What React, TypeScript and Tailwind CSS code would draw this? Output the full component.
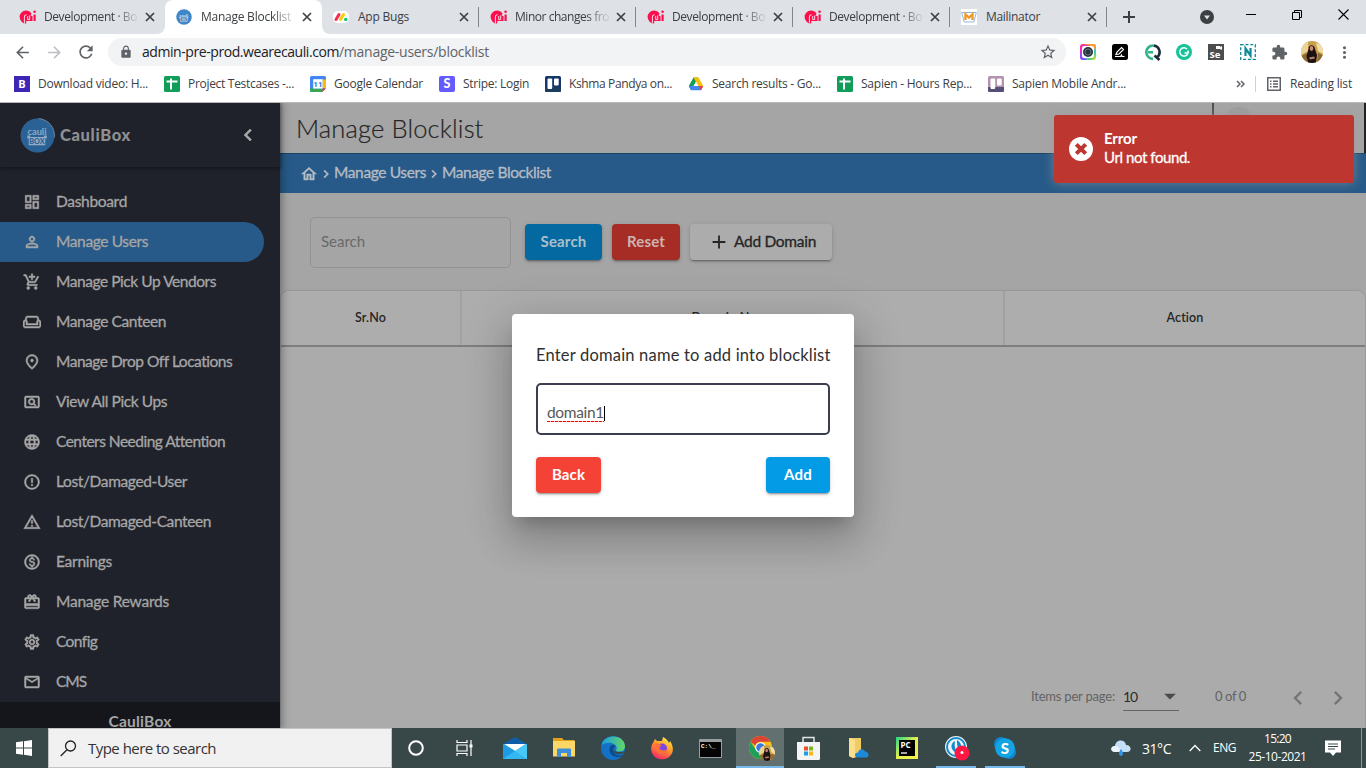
import { useLayoutEffect, useRef, type ReactNode } from "react";
import {
  MdOutlineDashboard, MdPersonOutline, MdOutlineAddShoppingCart, MdOutlineWeekend,
  MdOutlinePlace, MdOutlinePageview, MdLanguage, MdErrorOutline, MdOutlineReportProblem,
  MdOutlineMonetizationOn, MdCardGiftcard, MdOutlineSettings, MdMailOutline,
  MdChevronLeft, MdChevronRight, MdOutlineHome, MdAdd, MdArrowDropDown, MdLock,
  MdRefresh, MdArrowBack, MdArrowForward, MdStarBorder, MdMoreVert, MdExtension,
} from "react-icons/md";

/* Single-line label whose tracking is set so that it takes exactly `w` pixels. */
function Label({ w, className = "", children }: { w: number; className?: string; children: string }) {
  const ref = useRef<HTMLSpanElement>(null);
  useLayoutEffect(() => {
    const el = ref.current;
    if (!el) return;
    el.style.letterSpacing = "0px";
    const natural = el.getBoundingClientRect().width;
    el.style.letterSpacing = `${(w - natural) / children.length}px`;
  }, [w, children]);
  return <span ref={ref} className={`inline-block shrink-0 whitespace-pre ${className}`}>{children}</span>;
}

/* ---------- favicons ---------- */
const MiIcon = () => (
  <svg width="17" height="16" viewBox="0 0 17 16" fill="none">
    <path d="M7 1.500a6.400 6.400 0 0 1 5.500 2.700L11.500 6.500 13.500 7v5H7.200v2.500A6.500 6.500 0 0 1 7 1.500z" fill="#fb0f4d" />
    <path d="M5.400 14.300V8a2 2 0 0 1 2.200-2.200M8.700 7v3.600h2V6.500" stroke="#f7dbe3" strokeWidth="1" />
    <path d="M15.600 5.500v6.500" stroke="#fb0f4d" strokeWidth="2.200" />
    <circle cx="15.600" cy="2.800" r="1.300" fill="#fb0f4d" />
  </svg>
);
const CauliIcon = ({ size }: { size: number }) => (
  <svg width={size} height={size} viewBox="0 0 36 36">
    <circle cx="18" cy="18" r="17.500" fill={size > 20 ? "#2a6296" : "#3f86c9"} />
    {size > 20 && <path d="M19 .6A17.500 17.500 0 0 1 35.400 20" fill="none" stroke="#7f96ab" strokeWidth=".8" />}
    <g fill={size > 20 ? "#8fabc5" : "#d6e6f5"}>
      <text x="17.500" y="17" textAnchor="middle" fontSize="9.500" fontWeight="bold" fontFamily="Lato, sans-serif">cauli</text>
      <path d="M7.500 18h3v1.500h14V18h3v3h-1.500v7h-17v-7H7.500z" />
    </g>
    <text x="17.500" y="26.800" textAnchor="middle" fontSize="7.500" fontWeight="900" fontFamily="Lato, sans-serif" fill="#2a6296">BOX</text>
  </svg>
);
const MondayIcon = () => (
  <svg width="16" height="16" viewBox="0 0 16 16">
    <rect width="16" height="12" rx="5" y="2" fill="#fff" />
    <path d="M3 10.500L6 5.500" stroke="#f62b54" strokeWidth="3" strokeLinecap="round" />
    <path d="M7.500 10.500l3-5" stroke="#fc0" strokeWidth="3" strokeLinecap="round" />
    <circle cx="12.700" cy="10.400" r="1.700" fill="#00ca72" />
  </svg>
);
const MailinatorIcon = () => (
  <svg width="16" height="16" viewBox="0 0 16 16">
    <rect width="16" height="16" fill="#fff" />
    <path d="M.7 3.500h14.600l-2.500 9.500H3.200z" fill="none" stroke="#8db8dc" />
    <path d="M4.500 11V5.200L8 8.500l3.500-3.300V11" fill="none" stroke="#f09a2c" strokeWidth="2.400" />
  </svg>
);
const SheetsIcon = () => (
  <svg width="16" height="16" viewBox="0 0 16 16">
    <rect width="16" height="16" rx="1.500" fill="#0f9d58" />
    <path d="M2.500 5.600h11M7 2.500v11" stroke="#fff" strokeWidth="2" />
  </svg>
);
const BIcon = () => (
  <svg width="16" height="16" viewBox="0 0 16 16">
    <rect width="16" height="16" fill="#3f25b5" />
    <text x="8" y="12" textAnchor="middle" fontSize="11" fontWeight="bold" fill="#fff" fontFamily="Open Sans, sans-serif">B</text>
  </svg>
);
const CalendarIcon = () => (
  <svg width="16" height="16" viewBox="0 0 16 16">
    <path d="M1.500 0h13A1.500 1.500 0 0 1 16 1.500V12l-4 4H1.500A1.500 1.500 0 0 1 0 14.500v-13A1.500 1.500 0 0 1 1.500 0z" fill="#4285f4" />
    <path d="M12.500 3.500H16V12h-3.500z" fill="#fbbc04" />
    <path d="M0 12.500h12.500V16H1.500A1.500 1.500 0 0 1 0 14.500z" fill="#34a853" />
    <path d="M12.500 12.500H16L12.500 16z" fill="#ea4335" />
    <path d="M3.200 3.200h9.400v9.400H3.200z" fill="#fff" />
    <text x="7.900" y="11" textAnchor="middle" fontSize="8" fontWeight="bold" fill="#1a73e8" fontFamily="Roboto, sans-serif">11</text>
  </svg>
);
const StripeIcon = () => (
  <svg width="16" height="16" viewBox="0 0 16 16">
    <rect width="16" height="16" rx="2" fill="#635bff" />
    <text x="8" y="12.300" textAnchor="middle" fontSize="12.500" fontWeight="900" fill="#fff" fontFamily="Lato, sans-serif">S</text>
  </svg>
);
const TrelloIcon = ({ mauve = false }: { mauve?: boolean }) => (
  <svg width="16" height="16" viewBox="0 0 16 16">
    <rect width="16" height="16" rx="1.500" fill={mauve ? "#b493ae" : "#17366b"} />
    <path d="M0 11h16v3.500a1.500 1.500 0 0 1-1.500 1.500h-13A1.500 1.500 0 0 1 0 14.500z" fill={mauve ? "#54507a" : "#1b3d5c"} />
    <rect x="2.500" y="2.500" width="4.700" height="10.500" rx="1" fill="#fff" />
    <rect x="9" y="2.500" width="4.700" height="7" rx="1" fill="#fff" />
  </svg>
);
const DriveIcon = () => (
  <svg width="16" height="16" viewBox="0 0 16 16">
    <path d="M5.500 1.500h5L5.300 10.500 3.200 14.300.8 10z" fill="#0f9d58" />
    <path d="M5.500 1.500h5l4.700 8.500h-5z" fill="#fbbc04" />
    <path d="M.8 10.200L3 14.300h10l2.200-4.300H5.500z" fill="#4285f4" />
    <path d="M10.500 10h4.700L13 14.300z" fill="#ea4335" />
    <path d="M8 5.800L10.400 10H5.600z" fill="#fff" />
  </svg>
);

const CloseX = () => (
  <svg width="10" height="10" viewBox="0 0 10 10" stroke="#3c4043" strokeWidth="1.700"><path d="M1 1l8 8M9 1L1 9" /></svg>
);

/* ---------- browser chrome ---------- */
function Tab({ icon, title, w, active = false, fade = true, line = true }: {
  icon: ReactNode; title: string; w: number; active?: boolean; fade?: boolean; line?: boolean;
}) {
  return (
    <div className={`relative flex h-[34px] w-[157px] shrink-0 items-center pl-[11px] ${active ? "rounded-t-lg bg-white" : ""}`}>
      <div className="flex w-[17px] shrink-0">{icon}</div>
      <div className={`ml-2 flex w-[94px] pb-px ${fade ? "[mask-image:linear-gradient(to_right,#000_75%,#0002_98%)]" : ""}`}>
        <Label w={w} className="text-[12px] leading-4 text-[#3c4043]">{title}</Label>
      </div>
      <div className="ml-[7px]"><CloseX /></div>
      {line && <div className="absolute right-0 top-[7px] h-5 w-px bg-[#80868b]" />}
      {active && (
        <>
          <svg className="absolute -left-2 bottom-0" width="8" height="8"><path d="M8 0v8H0a8 8 0 0 0 8-8" fill="#fff" /></svg>
          <svg className="absolute -right-2 bottom-0" width="8" height="8"><path d="M0 0v8h8a8 8 0 0 1-8-8" fill="#fff" /></svg>
        </>
      )}
    </div>
  );
}

function TabStrip() {
  return (
    <div className="flex h-[34px] items-center bg-[#dee1e6] pl-2">
      <Tab icon={<MiIcon />} title="Development · Bo" w={93} line={false} />
      <Tab icon={<CauliIcon size={16} />} title="Manage Blocklist" w={90} active line={false} />
      <Tab icon={<MondayIcon />} title="App Bugs" w={51} fade={false} />
      <Tab icon={<MiIcon />} title="Minor changes fro" w={94} />
      <Tab icon={<MiIcon />} title="Development · Bo" w={93} />
      <Tab icon={<MiIcon />} title="Development · Bo" w={93} />
      <Tab icon={<MailinatorIcon />} title="Mailinator" w={54} fade={false} />
      <svg className="ml-[16px]" width="12" height="12" stroke="#3c4043" strokeWidth="2"><path d="M6 0v12M0 6h12" /></svg>
      <svg className="ml-[65px]" width="14" height="14"><circle cx="7" cy="7" r="7" fill="#3c4043" /><path d="M4 5.500h6L7 9.500z" fill="#dee1e6" /></svg>
      <svg className="ml-[32px]" width="10" height="14" stroke="#000"><path d="M0 4.500h10" /></svg>
      <svg className="ml-[36px]" width="11" height="16" fill="none" stroke="#000"><path d="M.5 3.500h7v7h-7zM2.500 3.500v-2h7v7h-2" /></svg>
      <svg className="ml-[35px]" width="11" height="16" stroke="#000" strokeWidth="1.100"><path d="M.5.500l10 10M10.500.500l-10 10" /></svg>
    </div>
  );
}

function Avatar({ size }: { size: number }) {
  return (
    <svg width={size} height={size} viewBox="0 0 22 22">
      <defs><clipPath id={`av${size}`}><circle cx="11" cy="11" r="11" /></clipPath></defs>
      <g clipPath={`url(#av${size})`}>
        <path d="M0 0h22v22H0z" fill="#c9a04c" />
        <path d="M0 3l7-3v10l-7 4z" fill="#e9d39b" /><path d="M15 2l7 2v9l-5-3z" fill="#f1dda7" />
        <path d="M0 15l6-3v10H0zM17 12l5 2v8h-6z" fill="#8d6a34" />
        <path d="M7.500 8c0-5 6-5 6.500 0l2 6-1 8H7l-1.500-7z" fill="#1c1214" />
        <ellipse cx="10.500" cy="7.500" rx="1.800" ry="2.400" fill="#c58b72" />
        <path d="M8 16.500l5-1 1 2-5 1z" fill="#b47f67" />
      </g>
    </svg>
  );
}

function Toolbar() {
  return (
    <div className="flex h-[35px] items-center bg-white pl-[13px] pt-px text-[#5f6368]">
      <MdArrowBack size={19} />
      <MdArrowForward size={19} className="ml-[13px] text-[#bcbec1]" />
      <MdRefresh size={20} className="ml-[12px]" />
      <div className="ml-3 flex h-7 w-[958px] items-center rounded-full bg-[#f1f3f4] pl-[11px] pr-[9px]">
        <MdLock size={14} />
        <div className="ml-[9px] flex pb-px text-[14px]">
          <Label w={197} className="text-[#202124]">admin-pre-prod.wearecauli.com</Label>
          <Label w={150}>/manage-users/blocklist</Label>
        </div>
        <MdStarBorder size={18} className="ml-auto" />
      </div>
      <div className="ml-[14px] flex items-center gap-4">
        <svg width="16" height="16" viewBox="0 0 16 16">
          <defs><linearGradient id="rb" x2="1" y2="1"><stop offset="0" stopColor="#ff2d78" /><stop offset=".3" stopColor="#e22ae8" /><stop offset=".55" stopColor="#2fb6ff" /><stop offset=".8" stopColor="#58d76c" /><stop offset="1" stopColor="#ffcf2d" /></linearGradient></defs>
          <rect width="16" height="16" rx="3" fill="url(#rb)" />
          <path d="M3 0h10a3 3 0 0 1 3 3v3L10 2z" fill="#ff9a2e" />
          <path d="M0 9v4a3 3 0 0 0 3 3h4l-4-3z" fill="#8d4dff" />
          <rect x="2" y="2" width="12" height="12" rx="2" fill="#fff" /><circle cx="8" cy="8" r="5" fill="#28343f" /><circle cx="8" cy="8" r="3" fill="none" stroke="#65717b" />
        </svg>
        <svg width="16" height="16" viewBox="0 0 16 16"><rect width="16" height="16" rx="2.500" fill="#000" /><path d="M4 10.500l1-2.500 4.500-4.500 2 2L7 10zM3 12.500h5.500l1-1.500.5 1.500h2.500" fill="none" stroke="#fff" strokeWidth="1.200" /></svg>
        <svg width="17" height="17" viewBox="0 0 17 17" fill="none" strokeWidth="2.600"><path d="M9 1.500a6.700 6.700 0 1 0 0 13.400M4 8.200h5" stroke="#2db48b" /><path d="M9.500 1.600a6.500 6.500 0 0 1 3 12M10.500 11.500l5 4.500" stroke="#1f2a3c" /></svg>
        <svg className="-ml-px" width="16" height="16" viewBox="0 0 16 16"><circle cx="8" cy="8" r="8" fill="#15c39a" /><path d="M11 5a4.200 4.200 0 1 0 1 4H8.500M12 6.500V9.800" fill="none" stroke="#fff" strokeWidth="1.500" /></svg>
        <svg width="16" height="16" viewBox="0 0 16 16"><rect width="16" height="16" fill="#4d4d4d" /><text x="1.500" y="14" fontSize="9.500" fontWeight="bold" fill="#fff" fontFamily="Open Sans, sans-serif">Se</text><path d="M8 2h4v1l2-1v4l-2-1H8z" fill="#fff" /></svg>
        <svg width="16" height="16" viewBox="0 0 16 16" fill="none" stroke="#0f8a96"><rect x=".7" y=".7" width="14.600" height="14.600" strokeDasharray="3 1.800" strokeWidth="1.300" /><path d="M5.500 12V4.500l5 7V4" strokeWidth="2.200" /></svg>
        <MdExtension size={17} className="-ml-px" />
      </div>
      <div className="ml-[13px]"><Avatar size={22} /></div>
      <MdMoreVert size={19} className="ml-[12px]" />
    </div>
  );
}

const bookmarks: { icon: ReactNode; text: string; w: number }[] = [
  { icon: <BIcon />, text: "Download video: H...", w: 110 },
  { icon: <SheetsIcon />, text: "Project Testcases -...", w: 106 },
  { icon: <CalendarIcon />, text: "Google Calendar", w: 89 },
  { icon: <StripeIcon />, text: "Stripe: Login", w: 66 },
  { icon: <TrelloIcon />, text: "Kshma Pandya on...", w: 103 },
  { icon: <DriveIcon />, text: "Search results - Go...", w: 109 },
  { icon: <SheetsIcon />, text: "Sapien - Hours Rep...", w: 111 },
  { icon: <TrelloIcon mauve />, text: "Sapien Mobile Andr...", w: 114 },
];

function Bookmarks() {
  return (
    <div className="flex h-[34px] items-center border-b border-[#b9b9b9] bg-white pb-[3px] pl-[14px] text-[12px] text-[#3c4043]">
      <div className="flex gap-4">
        {bookmarks.map((b, i) => (
          <div key={i} className="flex items-center gap-2">{b.icon}<Label w={b.w}>{b.text}</Label></div>
        ))}
      </div>
      <svg className="ml-auto" width="9" height="8" fill="none" stroke="#5f6368" strokeWidth="1.500"><path d="M1 1l3 3-3 3M5 1l3 3-3 3" /></svg>
      <div className="ml-[10px] h-4 w-px bg-[#ced1d5]" />
      <svg className="ml-[11px]" width="14" height="14" fill="none" stroke="#5f6368" strokeWidth="1.500"><path d="M.75.75h12.500v12.500H.75zM3 4.200h1.500M3 7h1.500M3 9.800h1.500M6 4.200h5M6 7h5M6 9.800h5" /></svg>
      <Label w={62} className="ml-[9px] mr-[14px]">Reading list</Label>
    </div>
  );
}

/* ---------- application ---------- */
const nav = [
  { Icon: MdOutlineDashboard, text: "Dashboard", w: 71 },
  { Icon: MdPersonOutline, text: "Manage Users", w: 92, active: true },
  { Icon: MdOutlineAddShoppingCart, text: "Manage Pick Up Vendors", w: 160 },
  { Icon: MdOutlineWeekend, text: "Manage Canteen", w: 110 },
  { Icon: MdOutlinePlace, text: "Manage Drop Off Locations", w: 176 },
  { Icon: MdOutlinePageview, text: "View All Pick Ups", w: 111 },
  { Icon: MdLanguage, text: "Centers Needing Attention", w: 169 },
  { Icon: MdErrorOutline, text: "Lost/Damaged-User", w: 131 },
  { Icon: MdOutlineReportProblem, text: "Lost/Damaged-Canteen", w: 155 },
  { Icon: MdOutlineMonetizationOn, text: "Earnings", w: 56 },
  { Icon: MdCardGiftcard, text: "Manage Rewards", w: 113 },
  { Icon: MdOutlineSettings, text: "Config", w: 41 },
  { Icon: MdMailOutline, text: "CMS", w: 30 },
];

/* Half-step heavier than regular, for the medium-weight labels. */
const medium = "[-webkit-text-stroke:0.3px_currentColor]";
/* Heavier icon strokes; the icons' empty bounding-box path stays hidden. */
const heavy = "stroke-current stroke-[0.6px] [&_path[fill=none]]:hidden";

function Sidebar() {
  return (
    <aside className="z-10 flex w-[280px] shrink-0 flex-col bg-[#20222b] text-[#a6a6a6] shadow-[0_0_8px_2px_rgba(0,0,0,0.35)]">
      <div className="flex h-16 shrink-0 items-center pl-5 pr-[20px] shadow-[0_1px_3px_1px_rgba(0,0,0,0.3)]">
        <CauliIcon size={35} />
        <Label w={71} className="ml-[5px] text-[16.500px] font-black text-[#8f9094]">CauliBox</Label>
        <MdChevronLeft size={24} className={`ml-auto ${heavy}`} />
      </div>
      <nav className="flex flex-1 flex-col pt-[15px]">
        {nav.map(({ Icon, text, w, active }) => (
          <div key={text} className={`flex h-10 w-[264px] shrink-0 items-center rounded-r-full pl-[23px] ${active ? "bg-[#275a88]" : ""}`}>
            <Icon size={18} className={heavy} />
            <Label w={w} className={`ml-[15px] pb-[2px] text-[15.500px] leading-[22px] ${medium}`}>{text}</Label>
          </div>
        ))}
      </nav>
      <div className="flex h-[26px] shrink-0 justify-center overflow-hidden bg-[#15161b] pt-[8px]">
        <Label w={63} className="text-[15.500px] font-bold leading-[22px]">CauliBox</Label>
      </div>
    </aside>
  );
}

const elevation = "shadow-[0_3px_1px_-2px_rgba(0,0,0,0.2),0_2px_2px_rgba(0,0,0,0.14),0_1px_5px_rgba(0,0,0,0.12)]";

function Main() {
  return (
    <main className="relative flex flex-1 flex-col bg-[#a5a5a5] text-[#252525]">
      <header className="flex h-[51px] shrink-0 border-b border-[#1e4468] pl-4">
        <Label w={187.500} className="mt-[7px] text-[25.500px] leading-9 font-light [-webkit-text-stroke:0.2px_currentColor]">Manage Blocklist</Label>
        <div className="ml-auto flex w-[154px] border-l-2 border-r-2 border-l-[#4f4f4f] border-r-[#222]">
          <div className="ml-[11px] mt-1 h-7 w-7 rounded-full bg-[#9d9d9d]" />
        </div>
      </header>
      <div className="flex h-[39px] shrink-0 items-center bg-[#275a88] pl-5 text-[15.500px] text-[#b5bcc4]">
        <MdOutlineHome size={18} className={heavy} />
        <MdChevronRight size={16} className={heavy} />
        <Label w={92} className={`pb-[2px] ${medium}`}>Manage Users</Label>
        <MdChevronRight size={16} className={heavy} />
        <Label w={109} className={`pb-[2px] ${medium}`}>Manage Blocklist</Label>
      </div>
      <div className="flex h-[98px] shrink-0 items-center pl-[30px]">
        <div className="flex h-[51px] w-[201px] items-center rounded-[5px] border border-[#929292] pl-[10px]">
          <Label w={44} className="pb-[2px] text-[15px] text-[#696969]">Search</Label>
        </div>
        <div className={`ml-[14px] flex h-9 w-[77px] items-center justify-center rounded bg-[#0369a0] text-[15px] font-bold text-[#acbfcb] ${elevation}`}><Label w={46} className="pb-[2px]">Search</Label></div>
        <div className={`ml-[10px] flex h-9 w-[68px] items-center justify-center rounded bg-[#a62d26] text-[15px] font-bold text-[#cdb3b2] ${elevation}`}><Label w={38} className="pb-[2px]">Reset</Label></div>
        <div className={`ml-[10px] flex h-9 w-[142px] items-center rounded bg-[#acacac] pl-[18px] text-[15.500px] ${elevation}`}>
          <MdAdd size={22} /><Label w={82} className={`ml-[4px] pb-[2px] leading-[22px] ${medium}`}>Add Domain</Label>
        </div>
      </div>
      <section className="ml-px mr-px flex flex-1 flex-col rounded-t-lg bg-[#ababab] shadow-[0_0_2px_rgba(0,0,0,0.3)]">
        <div className="flex h-[56px] shrink-0 items-center rounded-t-lg border-b-2 border-[#7e7e7e] bg-[#adadad] text-[12.500px] font-semibold">
          <div className="flex h-full w-[181px] items-center justify-center border-r-2 border-[#a2a2a2]"><Label w={31}>Sr.No</Label></div>
          <div className="flex h-full w-[543px] items-center justify-center border-r-2 border-[#a2a2a2]"><Label w={82}>Domain Name</Label></div>
          <div className="flex flex-1 justify-center"><Label w={37}>Action</Label></div>
        </div>
        <div className="mt-auto flex h-16 items-center pl-[750px] text-[13px] text-[#636363]">
          <Label w={84} className="pt-[2px]">Items per page:</Label>
          <div className="ml-[8px] mt-[3px] flex h-[27px] w-14 items-center border-b border-[#666] pb-[2px] text-[#2c2c2c]">
            <Label w={14} className="text-[14px]">10</Label>
            <MdArrowDropDown size={28} className="ml-auto -mr-[5px] text-[#4b4b4b]" />
          </div>
          <Label w={31} className="ml-9 pt-[2px]">0 of 0</Label>
          <MdChevronLeft size={28} className="ml-[38px] mt-[3px] text-[#757575]" />
          <MdChevronRight size={28} className="ml-[12px] mt-[3px] text-[#757575]" />
        </div>
      </section>

      <div className="absolute left-[774px] top-[12px] flex h-[68px] w-[300px] items-center rounded-[3px] bg-[#bd362f] pl-[15px] text-white shadow-[0_0_12px_#999999a0]">
        <svg width="24" height="24" viewBox="0 0 24 24"><circle cx="12" cy="12" r="12" fill="#fff" /><path d="M7.300 7.300l9.400 9.400M16.700 7.300l-9.400 9.400" stroke="#bd362f" strokeWidth="4" /></svg>
        <div className="ml-[11px] flex flex-col pb-[2px] text-[15px] leading-[19px]">
          <Label w={33} className="self-start font-bold">Error</Label>
          <Label w={86} className={`self-start ${medium}`}>Url not found.</Label>
        </div>
      </div>
    </main>
  );
}

function Dialog() {
  return (
    <div className="absolute left-[512px] top-[211px] z-20 flex h-[203px] w-[342px] flex-col rounded bg-white px-6 text-[#2f2f2f] shadow-[0_11px_15px_-7px_rgba(0,0,0,0.2),0_24px_38px_3px_rgba(0,0,0,0.14),0_9px_46px_8px_rgba(0,0,0,0.12)]">
      <Label w={294.500} className="mt-[29px] self-start text-[16.500px] leading-6">Enter domain name to add into blocklist</Label>
      <div className="mt-4 flex h-[52px] shrink-0 items-end rounded-[5px] border-2 border-[#3a3e50] pb-[11px] pl-[9px]">
        <Label w={57} className="bg-[repeating-linear-gradient(90deg,#f00_0_3px,#fbb_3px_4px)] bg-[length:100%_1px] bg-bottom bg-no-repeat pb-px text-[15.500px] leading-[17px] text-[#585858]">domain1</Label>
        <div className="mb-px h-[15px] w-px bg-black" />
      </div>
      <div className="mt-[22px] flex justify-between text-[15px] font-bold text-white">
        <div className={`flex h-9 w-[65px] items-center justify-center rounded bg-[#f44336] ${elevation}`}><Label w={33} className="pb-[2px]">Back</Label></div>
        <div className={`flex h-9 w-16 items-center justify-center rounded bg-[#039be5] ${elevation}`}><Label w={28} className="pb-[2px]">Add</Label></div>
      </div>
    </div>
  );
}

/* ---------- taskbar ---------- */
function Slot({ children, running = false, active = false }: { children: ReactNode; running?: boolean; active?: boolean }) {
  return (
    <div className={`flex h-10 w-12 shrink-0 items-center justify-center ${active ? "border-b-2 border-[#76b9ed] bg-[#62706f] pt-[2px]" : ""} ${running ? "bg-[linear-gradient(#76b9ed,#76b9ed)] bg-[length:40px_2px] bg-bottom bg-no-repeat" : ""}`}>
      {children}
    </div>
  );
}

function Taskbar() {
  return (
    <div className="flex h-10 items-center bg-[#384848] text-white">
      <Slot><svg width="16" height="16" fill="#fff"><path d="M0 2.300l7-1v6.300H0zM8 1.200L16 0v7.600H8zM0 8.500h7v6.300l-7-1zM8 8.500h8V16l-8-1.200z" /></svg></Slot>
      <div className="flex h-10 w-[344px] items-center border border-[#c4c4c4] bg-[#f1f1f1] pl-[11px]">
        <svg width="17" height="17" fill="none" stroke="#222" strokeWidth="1.300"><circle cx="10.500" cy="6" r="5" /><path d="M7 9.700L.7 16" /></svg>
        <Label w={128} className="ml-[11px] text-[15px] text-[#333]">Type here to search</Label>
      </div>
      <Slot><svg width="16" height="16" fill="none" stroke="#fff" strokeWidth="2"><circle cx="8" cy="8" r="6.800" /></svg></Slot>
      <Slot><svg width="17" height="16" fill="none" stroke="#fff" strokeWidth="1.200"><path d="M1 0v2.500h10V0M1 16v-2.500h10V16M1 5h10v6H1zM15 0v16" /><path d="M13.500 4.500h3v3h-3z" fill="#fff" stroke="none" /></svg></Slot>
      <div className="w-[3px]" />
      <Slot><svg width="24" height="24" viewBox="0 0 24 24"><path d="M0 8l12-7 12 7v4H0z" fill="#0f5ea8" /><path d="M0 8h24v15H0z" fill="#35b8f1" /><path d="M1.500 8h21L12 15z" fill="#fff" /><path d="M0 8l12 7L0 23z" fill="#1e9be4" /><path d="M24 8L12 15l12 8z" fill="#48c8f5" /></svg></Slot>
      <div className="w-px" />
      <Slot><svg width="22" height="20" viewBox="0 0 22 20"><path d="M0 0h9l2 2h10.500v16H0z" fill="#e3a21a" /><path d="M0 3h22v15.500H0z" fill="#fcd667" /><path d="M4 19v-7.500a1 1 0 0 1 1-1h12a1 1 0 0 1 1 1V19h-4v-4H8v4z" fill="#3c8fd8" /></svg></Slot>
      <div className="w-px" />
      <Slot><svg width="24" height="24" viewBox="0 0 24 24"><defs><linearGradient id="ed" x2="1"><stop offset="0" stopColor="#1b9de2" /><stop offset="1" stopColor="#62d764" /></linearGradient></defs><circle cx="12" cy="12" r="12" fill="#1372c6" /><path d="M.6 9C2-2 23-3 24 10c.2 4-3 6-7 5.500-2-.3-2.500-1-1.500-2.500C17 8 8 4 .6 9z" fill="url(#ed)" /><path d="M9 11c-2 5 2 10 8 10 2 0 4-1 5-2-4 1-9 1-10-5 0-2 1-3 2.500-3.500C12 8 10 9 9 11z" fill="#0b4a91" /><path d="M12 14c1 4 5 5 9.500 3.500l2-1.500h-8z" fill="#384848" /></svg></Slot>
      <div className="w-px" />
      <Slot><svg width="24" height="24" viewBox="0 0 24 24"><defs><linearGradient id="ff" x2=".3" y2="1" x1=".8"><stop offset="0" stopColor="#fff04d" /><stop offset=".45" stopColor="#ff9a26" /><stop offset="1" stopColor="#f9246a" /></linearGradient></defs><path d="M3 7l2-4 2 2 5 0 1-4c4 2 5 4 6 6l1-2c4 6 4 12-1 16s-14 3-17-4c-1.500-4-1-7 1-10z" fill="url(#ff)" /><circle cx="12" cy="12.500" r="5" fill="#7a45e5" /><path d="M4 8c4-1 6 0 8 2-3 0-3 3-1 4 3 1 5 0 6-1-1 6-9 7-11 1z" fill="#ff7138" /></svg></Slot>
      <Slot><svg width="23" height="19" viewBox="0 0 23 19"><rect width="23" height="19" rx="1" fill="#999f9f" /><path d="M1 3h21v15H1z" fill="#050505" /><text x="2" y="9" fontSize="6" fontWeight="bold" fill="#fff" fontFamily="Liberation Mono, monospace">C:\_</text></svg></Slot>
      <div className="w-[2px]" />
      <Slot active><div className="relative ml-[2px] h-6 w-6">
        <svg width="23" height="23" viewBox="0 0 24 24"><circle cx="12" cy="12" r="12" fill="#fbc116" /><path d="M1.600 6A12 12 0 0 1 22.400 6H12a6 6 0 0 0-5.500 4z" fill="#db4437" /><path d="M1.600 6A12 12 0 0 0 12 24l5-9-10-1z" fill="#1fa05a" /><circle cx="12" cy="12" r="5.600" fill="#fff" /><circle cx="12" cy="12" r="4.400" fill="#3b78e7" /></svg>
        <div className="absolute left-[10px] top-[9px]"><Avatar size={16} /></div>
      </div></Slot>
      <Slot><svg width="23" height="24" viewBox="0 0 23 24"><path d="M6 8V1.500h11V8" fill="none" stroke="#dfe3e3" strokeWidth="1.500" /><path d="M0 6h23v16.500a1.500 1.500 0 0 1-1.500 1.500h-20A1.500 1.500 0 0 1 0 22.500z" fill="#f4f4f4" /><path d="M7 10.500h4v4H7z" fill="#e8502c" /><path d="M12 10.500h4v4h-4z" fill="#7cb823" /><path d="M7 15.500h4v4H7z" fill="#1aa0e2" /><path d="M12 15.500h4v4h-4z" fill="#f8b81d" /></svg></Slot>
      <div className="w-[2px]" />
      <Slot><svg width="21" height="20" viewBox="0 0 21 20"><path d="M1 0h12v18l-8 2-4-2z" fill="#f3cb65" /><path d="M1 0l6 2v17l-2 1-4-2z" fill="#fbe08c" /><path d="M10 19.500c-4 0-4-5 0-5 1-4 6-4 7-1 4 0 5 6 1 6z" fill="#1e88d9" /></svg></Slot>
      <div className="w-px" />
      <Slot><svg width="22" height="22" viewBox="0 0 22 22"><defs><linearGradient id="pc" x2="1" y2="1"><stop offset="0" stopColor="#21d789" /><stop offset=".5" stopColor="#e4f04d" /><stop offset="1" stopColor="#f9f04d" /></linearGradient></defs><path d="M0 0h22v22H0z" fill="url(#pc)" /><path d="M3 3h16v16H3z" /><text x="4.500" y="11" fontSize="8" fontWeight="bold" fill="#fff" fontFamily="Open Sans, sans-serif">PC</text><path d="M5 16h6" stroke="#fff" strokeWidth="1.300" /></svg></Slot>
      <div className="w-px" />
      <Slot running><svg className="ml-[2px]" width="25" height="25" viewBox="0 0 25 25"><circle cx="11" cy="11" r="11" fill="#eaf4fa" /><circle cx="11" cy="11" r="9" fill="none" stroke="#1689c9" strokeWidth="2" /><path d="M10 5c-6 3-4 11 3 12-3-3-4-7-3-12zM12 4c5 3 5 8 3 11-3-3-3-7-3-11z" fill="#1689c9" /><circle cx="17" cy="17" r="7.500" fill="#ff1744" /><circle cx="17" cy="16.500" r="1.500" fill="#fff" /></svg></Slot>
      <div className="w-px" />
      <Slot running><svg width="22" height="22" viewBox="0 0 22 22"><circle cx="7" cy="7" r="7" fill="#0f86ce" /><circle cx="15" cy="15" r="7" fill="#0f86ce" /><circle cx="11" cy="11" r="9.800" fill="#12a5e4" /><text x="11" y="16.500" textAnchor="middle" fontSize="15" fontWeight="900" fill="#fff" fontFamily="Lato, sans-serif">S</text></svg></Slot>
      <div className="ml-auto flex h-10 items-center">
        <svg width="20" height="17" viewBox="0 0 20 17"><path d="M4 12C-1 12-1 6 4 6c1-7 10-7 11-1 6 0 6 7 1 7z" fill="#c5e0f5" /><path d="M4 12C-1 12-1 6 4 6c3 0 5 2 5 6z" fill="#eaf4fb" /><path d="M10 9c4 5 1 7 0 7s-4-2 0-7z" fill="#3494e4" /></svg>
        <Label w={29} className="ml-[11px] text-[14px]">31°C</Label>
        <svg className="ml-[18px]" width="12" height="8" fill="none" stroke="#fff" strokeWidth="1.300"><path d="M.7 7L6 1.500 11.300 7" /></svg>
        <Label w={23} className="ml-[12px] text-[12px]">ENG</Label>
        <div className="ml-[12px] flex w-[59px] flex-col items-center text-[12px] leading-[18px]">
          <Label w={27}>15:20</Label>
          <Label w={58}>25-10-2021</Label>
        </div>
        <svg className="ml-[18px]" width="16" height="17"><path d="M0 .5h16v12h-5L8 16l-3-3.500H0z" fill="#fff" /><path d="M3 4h10M3 6.500h10M3 9h7" stroke="#384848" /></svg>
        <div className="ml-5 mr-1 h-10 w-px bg-[#8d9797]" />
      </div>
    </div>
  );
}

export default function App() {
  return (
    <div className="flex h-[768px] w-[1366px] flex-col overflow-hidden bg-white font-['Open_Sans',sans-serif]">
      <TabStrip />
      <Toolbar />
      <Bookmarks />
      <div className="relative flex h-[625px] shrink-0 overflow-hidden font-[Lato,sans-serif]">
        <Sidebar />
        <Main />
        <Dialog />
      </div>
      <Taskbar />
    </div>
  );
}
